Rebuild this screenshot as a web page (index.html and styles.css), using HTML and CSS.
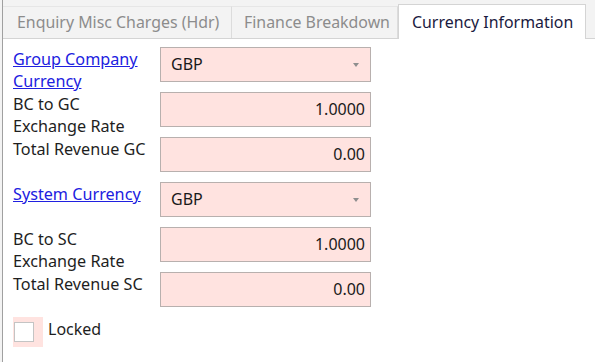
FILE: index.html
```html
<!DOCTYPE html>
<html lang="en">
<head>
    <meta charset="UTF-8">
    <meta name="viewport" content="width=device-width, initial-scale=1.0">
    <title>Currency Information</title>
    <link rel="stylesheet" href="styles.css">
</head>
<body>

    <div class="frame">
        <div class="tabs">
            <div class="tab">Enquiry Misc Charges (Hdr)</div>
            <div class="tab">Finance Breakdown</div>
            <div class="tab active">Currency Information</div>
        </div>

        <div class="panel">
            <div class="form">
                <a href="#" class="label link">Group Company<br>Currency</a>
                <div class="field combo">GBP<span class="arrow"></span></div>

                <div class="label">BC to GC<br>Exchange Rate</div>
                <div class="field num">1.0000</div>

                <div class="label">Total Revenue GC</div>
                <div class="field num">0.00</div>

                <a href="#" class="label link">System Currency</a>
                <div class="field combo">GBP<span class="arrow"></span></div>

                <div class="label">BC to SC<br>Exchange Rate</div>
                <div class="field num">1.0000</div>

                <div class="label">Total Revenue SC</div>
                <div class="field num">0.00</div>
            </div>

            <div class="check-row">
                <div class="check-wrap"><span class="check"></span></div>
                <span class="check-label">Locked</span>
            </div>
        </div>
    </div>

</body>
</html>
```

FILE: styles.css
```css
body {
    margin: 0;
    font-family: "Noto Sans", "Open Sans", sans-serif;
    font-size: 16px;
    color: #1e1e1e;
    background-color: #f3f3f3;
}

.frame {
    margin-left: 2px;
    height: 362px;
    border-left: 1px solid #a0a0a0;
    background: white;
}

.tabs {
    display: flex;
    align-items: flex-end;
    height: 38px;
    background-color: #f3f3f3;
    border-bottom: 1px solid #d4d4d4;
}

.tab {
    box-sizing: border-box;
    height: 32px;
    padding: 0 14px;
    line-height: 31px;
    font-size: 15.9px;
    white-space: nowrap;
    color: #8c8c8c;
    border-top: 1px solid #e6e6e6;
    border-right: 1px solid #dcdcdc;
}

.tab:first-child {
    width: 229px;
}

.tab:nth-child(2) {
    width: 166px;
    padding-left: 12px;
}

.tab.active {
    width: 188px;
    height: 35px;
    margin-bottom: -1px;
    padding-left: 13px;
    line-height: 34px;
    color: #1a1a40;
    background: white;
    border: 1px solid #d4d4d4;
    border-bottom: none;
}

.panel {
    padding: 8px 0 0 10px;
}

.form {
    display: grid;
    grid-template-columns: 147px 211px;
    grid-auto-rows: 35px;
    row-gap: 10px;
}

.label {
    padding-top: 1px;
    line-height: 22px;
    font-size: 16.2px;
    white-space: nowrap;
    color: #1e1e1e;
}

.link {
    align-self: start;
    justify-self: start;
    color: #2020e0;
    text-decoration: underline;
}

.field {
    box-sizing: border-box;
    position: relative;
    height: 35px;
    line-height: 33px;
    padding: 0 5px 0 10px;
    font-size: 16px;
    color: #1a1a1a;
    background-color: #ffe3e0;
    border: 1px solid #b8b0ae;
}

.num {
    text-align: right;
}

.arrow {
    position: absolute;
    right: 11px;
    top: 15px;
    width: 0;
    height: 0;
    border-left: 3.5px solid transparent;
    border-right: 3.5px solid transparent;
    border-top: 4px solid #8e8e8e;
}

.check-row {
    display: flex;
    align-items: center;
    margin-top: 10px;
    height: 30px;
}

.check-wrap {
    display: flex;
    align-items: center;
    width: 30px;
    height: 30px;
    background-color: #ffe3e0;
}

.check {
    box-sizing: border-box;
    width: 20px;
    height: 20px;
    margin-left: 1px;
    background: white;
    border: 1px solid #c4c4c4;
}

.check-label {
    margin-left: 5px;
    margin-top: -6px;
    font-size: 16px;
    color: #1e1e1e;
}
```
